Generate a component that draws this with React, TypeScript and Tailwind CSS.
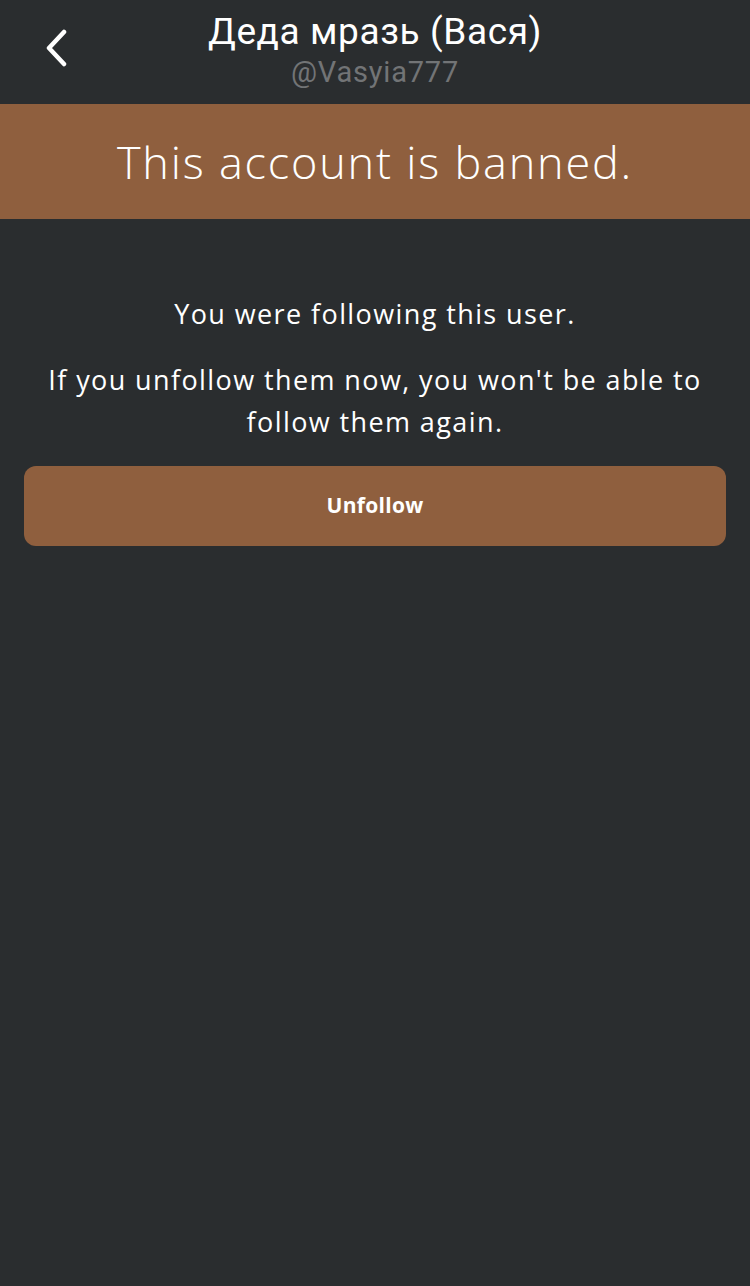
import React from 'react';

const App = () => {
  return (
    <div className="min-h-[1286px] w-full bg-[#2a2d2f] text-white" style={{ fontFamily: '"Open Sans", "Noto Sans", sans-serif' }}>
      <header className="relative h-[104px] flex flex-col items-center">
        <button className="absolute left-[40px] top-[28px] w-[32px] h-[40px] flex items-center justify-center">
          <svg width="26" height="38" viewBox="0 0 26 38" fill="none">
            <path d="M21 3 L6 19 L21 35" stroke="white" strokeWidth="4.5" strokeLinecap="round" strokeLinejoin="round" />
          </svg>
        </button>
        <div className="mt-[9px] text-[37px] leading-[46px] tracking-[0.6px]" style={{ fontFamily: 'Roboto, "Noto Sans", sans-serif' }}>
          Деда мразь (Вася)
        </div>
        <div className="text-[29px] leading-[34px] tracking-[0.8px] text-[#727476]" style={{ fontFamily: 'Roboto, "Noto Sans", sans-serif' }}>
          @Vasyia777
        </div>
      </header>
      <div className="h-[115px] bg-[#8f5f3e] flex items-center justify-center">
        <span className="text-[45px] font-light tracking-[1.8px]">This account is banned.</span>
      </div>
      <div className="px-[24px] pt-[74px] text-center">
        <p className="text-[27px] leading-[42px] tracking-[1.4px]">You were following this user.</p>
        <p className="mt-[24px] text-[27px] leading-[42px] tracking-[1.4px] px-[16px]">
          If you unfollow them now, you won't be able to follow them again.
        </p>
        <button
          className="mt-[23px] w-full h-[80px] rounded-[12px] bg-[#8f5f3e] text-[21px] font-bold tracking-[0.3px]"
          style={{ fontFamily: '"Open Sans", "Noto Sans", sans-serif' }}
        >
          Unfollow
        </button>
      </div>
    </div>
  );
};

export default App;
